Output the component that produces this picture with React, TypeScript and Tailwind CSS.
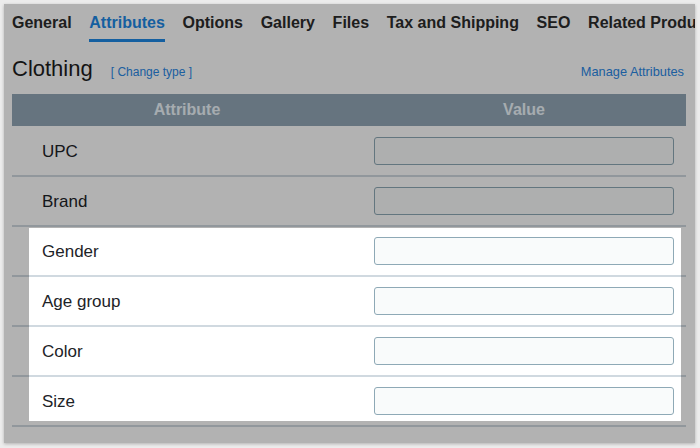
import React from "react";

const tabs = ["General", "Attributes", "Options", "Gallery", "Files", "Tax and Shipping", "SEO", "Related Products"];
const rows = ["UPC", "Brand", "Gender", "Age group", "Color", "Size"];

export default function App() {
  return (
    <div
      className="w-[700px] h-[448px] bg-[#ececec] p-[4px]"
      style={{ fontFamily: '"Liberation Sans", Arial, Helvetica, sans-serif' }}
    >
      <div className="relative w-[691px] h-[439px] overflow-hidden bg-white shadow-[0_1px_3px_rgba(0,0,0,0.25)] px-[8px] pt-[7px]">
        <div className="flex gap-[17.7px] whitespace-nowrap">
          {tabs.map((t) => (
            <div
              key={t}
              className={
                t === "Attributes"
                  ? "shrink-0 text-[16px] leading-[24px] font-bold pb-[4px] border-b-[3px] text-[#1e88e5] border-[#1e88e5]"
                  : "shrink-0 text-[16px] leading-[24px] font-bold pb-[4px] border-b-[3px] text-[#2c2c2c] border-transparent"
              }
            >
              {t}
            </div>
          ))}
        </div>

        <div className="mt-[13px] flex items-baseline h-[28px]">
          <span className="text-[22px] leading-[28px] text-[#1d1d1d]">Clothing</span>
          <span className="ml-[18px] text-[12px] text-[#2a88e6]">[ Change type ]</span>
          <span className="ml-auto mr-[3px] text-[12.8px] text-[#2a88e6]">Manage Attributes</span>
        </div>

        <div className="mt-[11px] w-[674px]">
          <div className="grid grid-cols-[350px_324px] h-[32px] items-center text-center bg-[#92a7b6] text-[16px] font-bold text-[#eef6fc]">
            <div>Attribute</div>
            <div>Value</div>
          </div>
          <div className="mt-px">
            {rows.map((r) => (
              <div
                key={r}
                className="grid grid-cols-[350px_324px] h-[50px] items-center border-b-2 border-[#d0d9e0]"
              >
                <div className="pl-[30px] pt-px text-[17px] text-[#1d2327]">{r}</div>
                <div className="px-[12px]">
                  <input
                    type="text"
                    readOnly
                    className="block w-full h-[28px] rounded-[3px] border border-[#8ea9b6] bg-[#f9fbfb] outline-none"
                  />
                </div>
              </div>
            ))}
          </div>
        </div>

        <div className="pointer-events-none absolute left-[25px] top-[224px] w-[652px] h-[193px] shadow-[0_0_0_2000px_rgba(0,0,0,0.3)]" />
      </div>
    </div>
  );
}
